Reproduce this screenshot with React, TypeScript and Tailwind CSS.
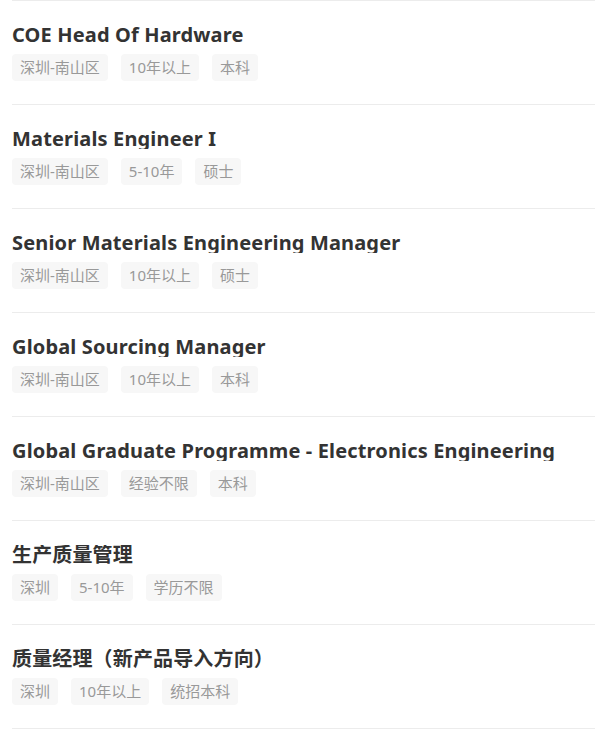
const jobs = [
  { title: "COE Head Of Hardware", tags: ["深圳-南山区", "10年以上", "本科"] },
  { title: "Materials Engineer I", tags: ["深圳-南山区", "5-10年", "硕士"] },
  { title: "Senior Materials Engineering Manager", tags: ["深圳-南山区", "10年以上", "硕士"] },
  { title: "Global Sourcing Manager", tags: ["深圳-南山区", "10年以上", "本科"] },
  { title: "Global Graduate Programme - Electronics Engineering", tags: ["深圳-南山区", "经验不限", "本科"] },
  { title: "生产质量管理", tags: ["深圳", "5-10年", "学历不限"] },
  { title: "质量经理（新产品导入方向）", tags: ["深圳", "10年以上", "统招本科"] },
];

export default function App() {
  return (
    <div
      className="bg-white min-h-screen pl-3"
      style={{ fontFamily: '"Noto Sans", "Noto Sans CJK SC", sans-serif' }}
    >
      <ul>
        {jobs.map((job, i) => (
          <li key={i} className="border-t border-[#ececec] pt-[24px] pb-[23px]">
            <h3 className="h-[20px] leading-[20px] overflow-hidden text-[20px] tracking-[0.15px] font-bold text-[#333] whitespace-nowrap">
              {job.title}
            </h3>
            <div className="mt-[9px] flex gap-[13px]">
              {job.tags.map((tag) => (
                <span
                  key={tag}
                  className="h-[27px] leading-[27px] px-[8px] bg-[#f7f7f7] text-[15px] text-[#999] rounded-sm"
                >
                  {tag}
                </span>
              ))}
            </div>
          </li>
        ))}
        <li className="border-t border-[#ececec]" />
      </ul>
    </div>
  );
}
